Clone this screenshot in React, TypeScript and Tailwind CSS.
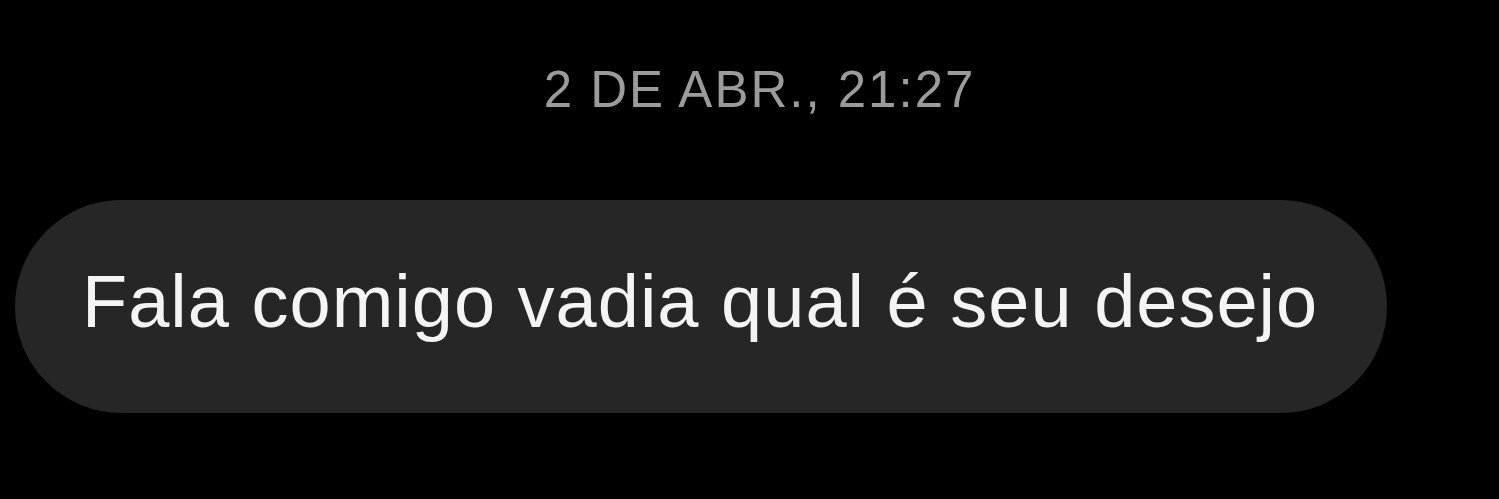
export default function App() {
  return (
    <div
      className="w-[1499px] h-[499px] overflow-hidden bg-black pt-[64px]"
      style={{ fontFamily: '"Liberation Sans", Arial, sans-serif' }}
    >
      {/* date separator */}
      <div className="flex justify-center pl-[20px]">
        <span className="text-[51px] leading-none tracking-[2px] text-[#9b9b9b]">2 DE ABR., 21:27</span>
      </div>

      {/* incoming message bubble */}
      <div className="mt-[85px] ml-[15px] w-[1372px] rounded-full bg-[#262626] pl-[67px] pt-[65px] pb-[74px]">
        <p className="text-[74px] leading-none tracking-[1px] text-[#f4f4f4] whitespace-nowrap">
          Fala comigo vadia qual é seu desejo
        </p>
      </div>
    </div>
  );
}
